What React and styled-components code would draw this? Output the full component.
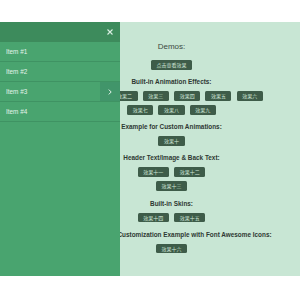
import React from 'react';
import styled, { createGlobalStyle } from 'styled-components';

const GlobalStyle = createGlobalStyle`
    body {
        margin: 0;
        background: #fff;
        font-family: "Liberation Sans", Arial, sans-serif;
    }
`;

const Frame = styled.div`
    position: relative;
    margin-top: 22px;
    height: 254px;
    overflow: hidden;
    background: #c8e6d4;
`;

const Page = styled.div`
    display: flex;
    flex-direction: column;
    align-items: center;
    padding: 20px 0 0 43px;
`;

const Title = styled.div`
    font-size: 8px;
    line-height: 10px;
    color: #3c4a42;
`;

const Heading = styled.div`
    width: 108px;
    margin: 8.5px 0 5px;
    font-size: 6.4px;
    line-height: 8px;
    font-weight: bold;
    color: #2e3832;
    text-align: center;
    white-space: nowrap;
`;

const Row = styled.div`
    display: flex;
    justify-content: center;
    gap: 5.3px;
    & + & {
        margin-top: 4.5px;
    }
`;

const Button = styled.button`
    height: 9.6px;
    margin-top: ${p => p.$top || 0}px;
    padding: 0 5.5px;
    border: none;
    border-radius: 1.5px;
    background: #3e5c49;
    color: #cfe6d8;
    font: 5px/9.6px "Noto Sans CJK SC", sans-serif;
    white-space: nowrap;
    cursor: pointer;
`;

const Drawer = styled.nav`
    position: absolute;
    top: 0;
    left: 0;
    bottom: 0;
    width: 120px;
    background: #49a46f;
`;

const DrawerHead = styled.div`
    display: flex;
    justify-content: flex-end;
    align-items: center;
    height: 20px;
    padding-right: 7px;
    background: #3d8b5c;
`;

const Item = styled.div`
    display: flex;
    align-items: center;
    justify-content: space-between;
    height: 19px;
    padding-left: 6px;
    border-bottom: 1px solid #3f9363;
    color: #e3f3e9;
    font-size: 6.4px;
`;

const Arrow = styled.div`
    display: flex;
    align-items: center;
    justify-content: center;
    width: 20px;
    height: 100%;
    background: #41956a;
`;

const sections = [
    { title: 'Built-in Animation Effects:', rows: [['效果一', '效果二', '效果三', '效果四', '效果五', '效果六'], ['效果七', '效果八', '效果九']] },
    { title: 'Example for Custom Animations:', rows: [['效果十']] },
    { title: 'Header Text/Image & Back Text:', rows: [['效果十一', '效果十二'], ['效果十三']] },
    { title: 'Built-in Skins:', rows: [['效果十四', '效果十五']] },
    { title: 'Customization Example with Font Awesome Icons:', rows: [['效果十六']] },
];

const App = () => (
    <>
        <GlobalStyle />
        <Frame>
            <Page>
                <Title>Demos:</Title>
                <Button $top={8}>点击查看效果</Button>
                {sections.map(s => (
                    <React.Fragment key={s.title}>
                        <Heading>{s.title}</Heading>
                        {s.rows.map((r, i) => (
                            <Row key={i}>
                                {r.map(b => <Button key={b}>{b}</Button>)}
                            </Row>
                        ))}
                    </React.Fragment>
                ))}
            </Page>
            <Drawer>
                <DrawerHead>
                    <svg width="6" height="6" viewBox="0 0 6 6">
                        <path d="M0.5 0.5L5.5 5.5M5.5 0.5L0.5 5.5" stroke="#d9efe2" strokeWidth="1.1" />
                    </svg>
                </DrawerHead>
                <Item>Item #1</Item>
                <Item>Item #2</Item>
                <Item>
                    Item #3
                    <Arrow>
                        <svg width="4" height="6" viewBox="0 0 4 6">
                            <path d="M0.8 0.6L3.2 3L0.8 5.4" fill="none" stroke="#e3f3e9" strokeWidth="1" />
                        </svg>
                    </Arrow>
                </Item>
                <Item>Item #4</Item>
            </Drawer>
        </Frame>
    </>
);

export default App;
